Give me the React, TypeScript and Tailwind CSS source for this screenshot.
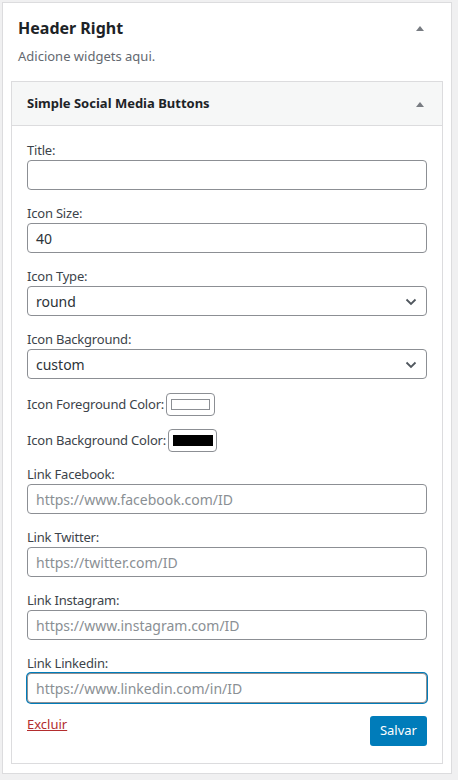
import React from "react";

const font = { fontFamily: '"Noto Sans", "Open Sans", sans-serif' };

const inputCls =
  "block w-full h-[30px] px-2 rounded-[4px] border border-[#8c8f94] bg-white text-[14px] text-[#2c3338] outline-none";

function Triangle() {
  return (
    <svg width="10" height="6" viewBox="0 0 10 6" className="shrink-0">
      <path d="M1 6 L5 1 L9 6 Z" fill="#787c82" />
    </svg>
  );
}

function Chevron() {
  return (
    <svg width="14" height="14" viewBox="0 0 14 14" className="absolute right-[8px] top-[8px]">
      <path d="M2.5 4.5 L7 9 L11.5 4.5" fill="none" stroke="#50575e" strokeWidth="1.8" />
    </svg>
  );
}

function Field({ label, children }: { label: string; children: React.ReactNode }) {
  return (
    <div className="mb-[14px]">
      <div className="text-[13px] leading-[19px] text-[#3c434a] tracking-[-0.2px]">{label}</div>
      {children}
    </div>
  );
}

function TextField({
  label,
  value,
  placeholder,
  focused,
}: {
  label: string;
  value?: string;
  placeholder?: string;
  focused?: boolean;
}) {
  return (
    <Field label={label}>
      <div
        className={`${inputCls} flex items-center ${
          focused ? "border-[#007cba] shadow-[0_0_0_1px_#007cba]" : ""
        }`}
      >
        {value ? (
          <span>{value}</span>
        ) : (
          <span className="text-[#8a8f94]">{placeholder}</span>
        )}
      </div>
    </Field>
  );
}

function SelectField({ label, value }: { label: string; value: string }) {
  return (
    <Field label={label}>
      <div className={`${inputCls} relative flex items-center`}>
        <span>{value}</span>
        <Chevron />
      </div>
    </Field>
  );
}

function ColorRow({ label, swatch }: { label: string; swatch: "white" | "black" }) {
  return (
    <div className="flex items-center mb-[13px] h-[23px]">
      <span className="text-[13px] text-[#3c434a] tracking-[-0.2px]">{label}</span>
      <div className="ml-[2px] w-[49px] h-[23px] rounded-[4px] border border-[#8c8f94] bg-white flex items-center justify-center">
        {swatch === "white" ? (
          <div className="w-[39px] h-[11px] border border-[#8c8f94] bg-white" />
        ) : (
          <div className="w-[40px] h-[11px] bg-black" />
        )}
      </div>
    </div>
  );
}

export default function App() {
  return (
    <div className="min-h-[780px] w-[458px] bg-[#f0f0f1] pt-[2px] pl-[2px]" style={font}>
      <div className="w-[450px] h-[772px] border border-[#dcdcde] bg-white flex flex-col">
        {/* sidebar header */}
        <div className="flex items-center justify-between pl-[15px] pr-[26px] pt-[13px]">
          <h2 className="text-[16px] leading-[24px] font-bold text-[#1d2327]">Header Right</h2>
          <Triangle />
        </div>
        <p className="pl-[15px] mt-[7px] text-[13px] leading-[18px] text-[#646970]">
          Adicione widgets aqui.
        </p>

        {/* widget */}
        <div className="mx-[8px] mt-[16px] border border-[#dcdcde] bg-white">
          <div className="h-[44px] bg-[#f6f7f7] border-b border-[#dcdcde] flex items-center justify-between pl-[15px] pr-[17px]">
            <span className="text-[13px] font-bold text-[#1d2327]">Simple Social Media Buttons</span>
            <Triangle />
          </div>

          <div className="px-[15px] pt-[15px] pb-[17px]">
            <TextField label="Title:" />
            <TextField label="Icon Size:" value="40" />
            <SelectField label="Icon Type:" value="round" />
            <SelectField label="Icon Background:" value="custom" />
            <ColorRow label="Icon Foreground Color:" swatch="white" />
            <ColorRow label="Icon Background Color:" swatch="black" />
            <TextField label="Link Facebook:" placeholder="https://www.facebook.com/ID" />
            <TextField label="Link Twitter:" placeholder="https://twitter.com/ID" />
            <TextField label="Link Instagram:" placeholder="https://www.instagram.com/ID" />
            <TextField label="Link Linkedin:" placeholder="https://www.linkedin.com/in/ID" focused />

            <div className="flex items-start justify-between -mt-[1px]">
              <a className="mt-[-1px] text-[13px] leading-[18px] text-[#b32d2e] underline cursor-pointer">
                Excluir
              </a>
              <button className="h-[30px] px-[10px] rounded-[3px] bg-[#007cba] text-white text-[13px]">
                Salvar
              </button>
            </div>
          </div>
        </div>
      </div>
    </div>
  );
}
